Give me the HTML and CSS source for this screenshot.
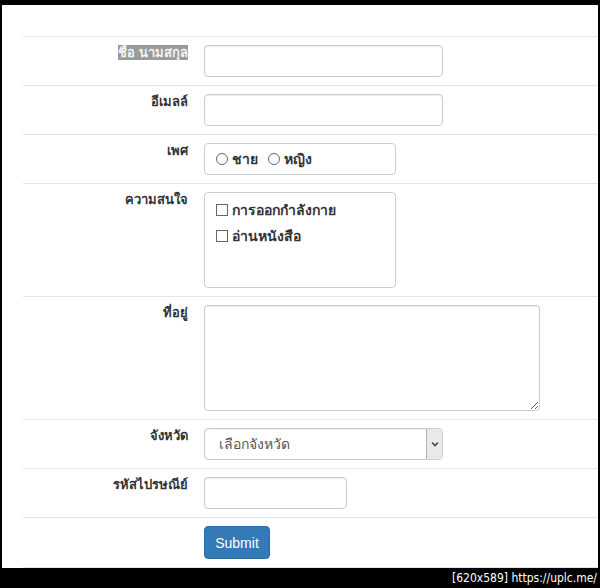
FILE: index.html
```html
<!DOCTYPE html>
<html lang="th">
<head>
    <meta charset="UTF-8">
    <meta name="viewport" content="width=device-width, initial-scale=1.0">
    <title>ฟอร์มสมัครสมาชิก</title>
    <link rel="stylesheet" href="styles.css">
</head>
<body>
    <div class="screen">
        <form class="frm">
            <table class="tb">
                <!-- 1. ชื่อ -->
                <tr>
                    <th><span class="sel">ชื่อ นามสกุล</span></th>
                    <td><input type="text" class="ipt w239"></td>
                </tr>
                <!-- 2. อีเมล -->
                <tr>
                    <th>อีเมลล์</th>
                    <td><input type="text" class="ipt w239"></td>
                </tr>
                <!-- 3. เพศ -->
                <tr>
                    <th>เพศ</th>
                    <td>
                        <div class="box gender">
                            <label class="opt"><input type="radio" name="sex"> ชาย</label>
                            <label class="opt"><input type="radio" name="sex"> หญิง</label>
                        </div>
                    </td>
                </tr>
                <!-- 4. ความสนใจ -->
                <tr>
                    <th>ความสนใจ</th>
                    <td>
                        <div class="box hobby">
                            <label class="opt"><input type="checkbox"> การออกกำลังกาย</label>
                            <label class="opt"><input type="checkbox"> อ่านหนังสือ</label>
                        </div>
                    </td>
                </tr>
                <!-- 5. ที่อยู่ -->
                <tr>
                    <th>ที่อยู่</th>
                    <td><textarea class="ipt addr"></textarea></td>
                </tr>
                <!-- 6. จังหวัด -->
                <tr>
                    <th>จังหวัด</th>
                    <td>
                        <div class="sbx">
                            <select class="ipt w239 sel-p">
                                <option>เลือกจังหวัด</option>
                            </select>
                            <span class="arrow">
                                <svg width="8" height="6" viewBox="0 0 8 6"><path d="M1 1.5 L4 4.5 L7 1.5" fill="none" stroke="#444" stroke-width="1.6"/></svg>
                            </span>
                        </div>
                    </td>
                </tr>
                <!-- 7. รหัสไปรษณีย์ -->
                <tr>
                    <th>รหัสไปรษณีย์</th>
                    <td><input type="text" class="ipt w143"></td>
                </tr>
                <!-- 8. ปุ่ม -->
                <tr>
                    <th></th>
                    <td><button type="button" class="btn">Submit</button></td>
                </tr>
            </table>
        </form>
    </div>
    <div class="foot">[620x589] https://uplc.me/</div>
</body>
</html>
```

FILE: styles.css
```css
html,body{
    margin: 0;
    padding: 0;
}
body{
    background: #000;
    width: 600px;
    height: 588px;
    overflow: hidden;
    font-family: Tahoma, "Liberation Sans", "DejaVu Sans", sans-serif;
    color: #333;
}
/* 흰 화면 */
.screen{
    margin: 5px 2px 0;
    width: 596px;
    height: 563px;
    background: #fff;
    overflow: hidden;
}
.frm{
    padding: 31px 0 0 21px;
}
.tb{
    border-collapse: separate;
    border-spacing: 0;
    width: 600px;
}
.tb th,
.tb td{
    border-top: 1px solid #e4e4e4;
    padding: 8px;
    vertical-align: top;
}
.tb tr:last-child th,
.tb tr:last-child td{
    border-bottom: 1px solid #e4e4e4;
}
.tb th{
    width: 157px;
    text-align: right;
    font-size: 13px;
    font-weight: bold;
    line-height: 16px;
}
/* 선택된 글자 */
.sel{
    background: #9a9a9a;
    color: #f4f4f4;
}
/* 입력창 공통 */
.ipt{
    display: block;
    box-sizing: border-box;
    height: 32px;
    margin: 0;
    padding: 6px 12px;
    font: 14px Tahoma, "Liberation Sans", sans-serif;
    color: #555;
    background: #fff;
    border: 1px solid #ccc;
    border-radius: 4px;
    box-shadow: inset 0 1px 1px rgba(0,0,0,.075);
}
.w239{ width: 239px; }
.w143{ width: 143px; }
.addr{
    width: 336px;
    height: 106px;
    resize: both;
}
.box{
    box-sizing: border-box;
    border: 1px solid #ccc;
    border-radius: 4px;
    width: 192px;
    padding: 0 11px;
}
.gender{
    height: 32px;
    display: flex;
    align-items: center;
    gap: 10px;
}
.hobby{
    height: 96px;
    display: flex;
    flex-direction: column;
    padding-top: 7px;
    gap: 6px;
}
.opt{
    display: flex;
    align-items: center;
    gap: 4px;
    font-size: 14px;
    font-weight: bold;
    line-height: 20px;
    color: #333;
}
.opt input{
    appearance: none;
    margin: 0;
    width: 12px;
    height: 12px;
    border: 1px solid #666;
    background: #fff;
}
.opt input[type=radio]{
    border-radius: 50%;
}
/* select */
.sbx{
    position: relative;
    width: 239px;
}
.sel-p{
    appearance: none;
    padding-left: 14px;
}
.arrow{
    position: absolute;
    top: 1px;
    right: 1px;
    width: 16px;
    height: 30px;
    box-sizing: border-box;
    background: #e9e9e9;
    border-left: 1px solid #b5b5b5;
    border-radius: 0 3px 3px 0;
    display: flex;
    align-items: center;
    justify-content: center;
}
/* 버튼 */
.btn{
    display: block;
    width: 66px;
    height: 33px;
    padding: 0;
    font: 14px "Liberation Sans", Arial, sans-serif;
    color: #fff;
    background: #337ab7;
    border: 1px solid #2e6da4;
    border-radius: 4px;
}
.foot{
    height: 20px;
    text-align: right;
    padding-right: 3px;
    color: #fff;
    font: 12px/20px "DejaVu Sans Condensed", "Liberation Sans", sans-serif;
}
```
